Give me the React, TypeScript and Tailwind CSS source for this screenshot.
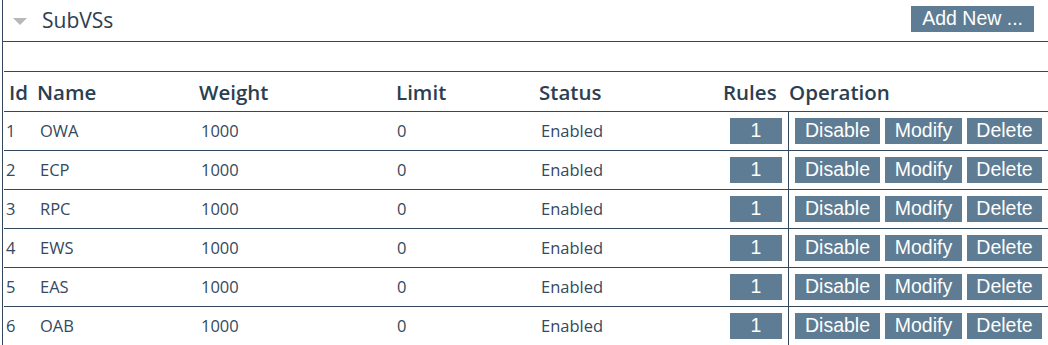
import React from "react";

const rows = [
  { id: 1, name: "OWA" },
  { id: 2, name: "ECP" },
  { id: 3, name: "RPC" },
  { id: 4, name: "EWS" },
  { id: 5, name: "EAS" },
  { id: 6, name: "OAB" },
];

function Btn({ children, className = "" }: { children: React.ReactNode; className?: string }) {
  return (
    <button
      className={`flex h-[26px] items-center justify-center bg-[#5e7c93] px-[10px] text-[19.5px] leading-none text-white ${className}`}
      style={{ fontFamily: '"Liberation Sans", Arial, sans-serif' }}
    >
      {children}
    </button>
  );
}

export default function App() {
  return (
    <div
      className="ml-[2px] h-[345px] overflow-hidden border-l border-[#34495e] bg-white text-[#2c3e50]"
      style={{ fontFamily: '"Open Sans", "Noto Sans", sans-serif' }}
    >
      {/* panel header */}
      <div className="flex h-[42px] items-center border-b border-[#34495e] pr-[14px]">
        <span className="ml-[10px] mt-[1px] h-0 w-0 border-x-[7px] border-t-[7px] border-x-transparent border-t-[#b8b8b8]" />
        <span className="ml-[15px] text-[21px] leading-none">SubVSs</span>
        <Btn className="ml-auto mb-[4px] px-[11px]">Add New ...</Btn>
      </div>

      <div className="ml-[1px] h-[30px] border-b border-[#34495e]" />

      {/* table header */}
      <div className="ml-[1px] flex h-[40px] items-center border-b border-[#34495e] pt-[2px] text-[20.5px] font-semibold leading-none">
        <div className="w-[32px] pl-[5px]">Id</div>
        <div className="w-[162px] pl-[1px]">Name</div>
        <div className="w-[197px] pl-[1px]">Weight</div>
        <div className="w-[143px] pl-[1px]">Limit</div>
        <div className="w-[184px] pl-[1px]">Status</div>
        <div className="w-[67px] pl-[1px]">Rules</div>
        <div>Operation</div>
      </div>

      {rows.map((r) => (
        <div
          key={r.id}
          className="ml-[1px] flex h-[39px] items-stretch border-b border-[#34495e] text-[16.5px] leading-none text-[#34495e]"
        >
          <div className="flex w-[32px] items-center pl-[2px]">{r.id}</div>
          <div className="flex w-[162px] items-center pl-[4px]">{r.name}</div>
          <div className="flex w-[197px] items-center pl-[3px]">1000</div>
          <div className="flex w-[143px] items-center pl-[2px]">0</div>
          <div className="flex w-[184px] items-center pl-[3px]">Enabled</div>
          <div className="flex w-[67px] items-center border-r border-[#34495e] pl-[8px]">
            <Btn className="w-[52px]">1</Btn>
          </div>
          <div className="flex items-center gap-[5px] pl-[6px]">
            <Btn className="w-[85px]">Disable</Btn>
            <Btn className="w-[77px]">Modify</Btn>
            <Btn className="w-[75px]">Delete</Btn>
          </div>
        </div>
      ))}
    </div>
  );
}
